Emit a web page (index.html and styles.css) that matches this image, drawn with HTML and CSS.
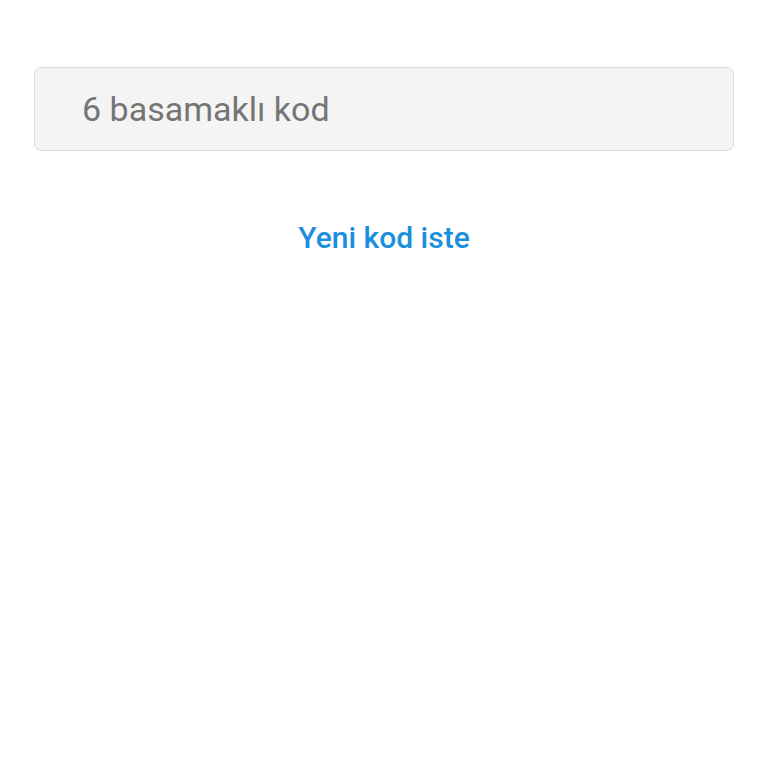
FILE: index.html
```html
<!DOCTYPE html>
<html>
<head>
  <meta charset="utf-8">
  <title>Kod doğrulama</title>
  <link rel="stylesheet" href="styles.css">
</head>
<body>
  <div class="page">
    <input class="code_input" type="text" placeholder="6 basamaklı kod">
    <a class="resend" href="#">Yeni kod iste</a>
  </div>
</body>
</html>
```

FILE: styles.css
```css
body {
    margin: 0;
    background: #ffffff;
    font-family: Roboto, "Noto Sans", sans-serif;
  }

  .page {
    display: flex;
    flex-direction: column;
    align-items: center;
    padding: 67px 34px 0 34px;
  }

  .code_input {
    box-sizing: border-box;
    width: 100%;
    height: 84px;
    padding: 0 0 0 47px;
    background-color: #f4f4f4;
    border: 1px solid #dcdcdc;
    border-radius: 7px;
    font-family: Roboto, sans-serif;
    font-size: 34px;
    color: #333;
    outline: none;
  }

  .code_input::placeholder {
    color: #757575;
  }

  .resend {
    margin-top: 69px;
    font-size: 30px;
    font-weight: 500;
    color: #1b8fdd;
    text-decoration: none;
  }
```
